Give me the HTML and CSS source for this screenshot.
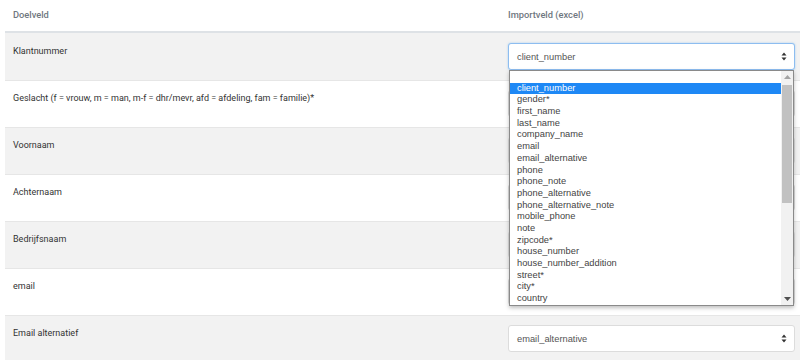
FILE: index.html
```html
<!DOCTYPE html>
<html lang="nl">
<head>
    <meta charset="UTF-8">
    <meta name="viewport" content="width=device-width, initial-scale=1.0">
    <title>Import velden koppelen</title>
    <link rel="stylesheet" href="styles.css">
</head>
<body>
    <div class="container">
        <table class="mapping">
            <thead>
                <tr>
                    <th class="col-target">Doelveld</th>
                    <th class="col-source">Importveld (excel)</th>
                </tr>
            </thead>
            <tbody>
                <tr>
                    <td>Klantnummer</td>
                    <td class="cell-picker">
                        <div class="picker-wrap">
                            <div class="picker focused">
                                <span>client_number</span>
                                <svg class="caret" width="6" height="9" viewBox="0 0 6 9"><path d="M3 0.5 L5.5 3.5 H0.5 Z M3 8.5 L5.5 5.5 H0.5 Z" fill="#333"/></svg>
                            </div>
                            <!-- open dropdown list -->
                            <div class="dropdown">
                                <ul class="options">
                                    <li>&nbsp;</li>
                                    <li class="active">client_number</li>
                                    <li>gender*</li>
                                    <li>first_name</li>
                                    <li>last_name</li>
                                    <li>company_name</li>
                                    <li>email</li>
                                    <li>email_alternative</li>
                                    <li>phone</li>
                                    <li>phone_note</li>
                                    <li>phone_alternative</li>
                                    <li>phone_alternative_note</li>
                                    <li>mobile_phone</li>
                                    <li>note</li>
                                    <li>zipcode*</li>
                                    <li>house_number</li>
                                    <li>house_number_addition</li>
                                    <li>street*</li>
                                    <li>city*</li>
                                    <li>country</li>
                                </ul>
                                <div class="scrollbar">
                                    <div class="scroll-btn">
                                        <svg width="7" height="4" viewBox="0 0 7 4"><path d="M3.5 0 L7 4 H0 Z" fill="#a3a3a3"/></svg>
                                    </div>
                                    <div class="scroll-track"><div class="scroll-thumb"></div></div>
                                    <div class="scroll-btn">
                                        <svg width="7" height="4" viewBox="0 0 7 4"><path d="M0 0 H7 L3.5 4 Z" fill="#505050"/></svg>
                                    </div>
                                </div>
                            </div>
                        </div>
                    </td>
                </tr>
                <tr>
                    <td>Geslacht (f = vrouw, m = man, m-f = dhr/mevr, afd = afdeling, fam = familie)*</td>
                    <td class="cell-picker">
                        <div class="picker"><span>gender*</span><svg class="caret" width="6" height="9" viewBox="0 0 6 9"><path d="M3 0.5 L5.5 3.5 H0.5 Z M3 8.5 L5.5 5.5 H0.5 Z" fill="#333"/></svg></div>
                    </td>
                </tr>
                <tr>
                    <td>Voornaam</td>
                    <td class="cell-picker">
                        <div class="picker"><span>first_name</span><svg class="caret" width="6" height="9" viewBox="0 0 6 9"><path d="M3 0.5 L5.5 3.5 H0.5 Z M3 8.5 L5.5 5.5 H0.5 Z" fill="#333"/></svg></div>
                    </td>
                </tr>
                <tr>
                    <td>Achternaam</td>
                    <td class="cell-picker">
                        <div class="picker"><span>last_name</span><svg class="caret" width="6" height="9" viewBox="0 0 6 9"><path d="M3 0.5 L5.5 3.5 H0.5 Z M3 8.5 L5.5 5.5 H0.5 Z" fill="#333"/></svg></div>
                    </td>
                </tr>
                <tr>
                    <td>Bedrijfsnaam</td>
                    <td class="cell-picker">
                        <div class="picker"><span>company_name</span><svg class="caret" width="6" height="9" viewBox="0 0 6 9"><path d="M3 0.5 L5.5 3.5 H0.5 Z M3 8.5 L5.5 5.5 H0.5 Z" fill="#333"/></svg></div>
                    </td>
                </tr>
                <tr>
                    <td>email</td>
                    <td class="cell-picker">
                        <div class="picker"><span>email</span><svg class="caret" width="6" height="9" viewBox="0 0 6 9"><path d="M3 0.5 L5.5 3.5 H0.5 Z M3 8.5 L5.5 5.5 H0.5 Z" fill="#333"/></svg></div>
                    </td>
                </tr>
                <tr>
                    <td>Email alternatief</td>
                    <td class="cell-picker">
                        <div class="picker"><span>email_alternative</span><svg class="caret" width="6" height="9" viewBox="0 0 6 9"><path d="M3 0.5 L5.5 3.5 H0.5 Z M3 8.5 L5.5 5.5 H0.5 Z" fill="#333"/></svg></div>
                    </td>
                </tr>
            </tbody>
        </table>
    </div>
</body>
</html>
```

FILE: styles.css
```css
* {
    margin: 0;
    padding: 0;
    box-sizing: border-box;
}

body {
    font-family: Roboto, 'Noto Sans', sans-serif;
    font-size: 9px;
    color: #333;
    background: #fff;
    overflow: hidden;
}

.container {
    padding-left: 5px;
}

.mapping {
    width: 100%;
    border-collapse: separate;
    border-spacing: 0;
}

.mapping th {
    text-align: left;
    font-weight: 500;
    font-size: 9.3px;
    color: #6f7780;
    padding: 8px 8px 9px;
    line-height: 14px;
    border-bottom: 2px solid #dee2e6;
}

.col-target {
    width: 495px;
}

.mapping td {
    vertical-align: top;
    padding: 10px 8px 9px;
    line-height: 14px;
    border-top: 1px solid #e6e6e6;
}

.mapping tbody tr:first-child td {
    border-top-color: #f2f2f2;
}

.mapping tbody tr:nth-child(odd) td {
    background: #f2f2f2;
}

.mapping td.cell-picker {
    padding: 9px 5px 10px 8px;
}

.picker-wrap {
    position: relative;
}

.picker {
    height: 27px;
    display: flex;
    align-items: center;
    justify-content: space-between;
    padding: 0 7px 0 8px;
    background: #fff;
    border: 1px solid #dcdcdc;
    border-radius: 3px;
    font-family: 'Liberation Sans', Arial, sans-serif;
    font-size: 9.3px;
    color: #555;
}

.picker.focused {
    border-color: #8dbdf0;
    box-shadow: 0 0 2px rgba(102, 175, 233, 0.6);
}

.caret {
    display: block;
}

/* the open list of the first picker */
.dropdown {
    position: absolute;
    top: 27px;
    left: 1px;
    right: 1px;
    display: flex;
    background: #fff;
    border: 1px solid #8a8a8a;
    box-shadow: 0 2px 4px rgba(0, 0, 0, 0.25);
    z-index: 10;
}

.options {
    list-style: none;
    flex: 1;
    font-family: 'Liberation Sans', Arial, sans-serif;
    font-size: 9.3px;
    color: #444;
}

.options li {
    height: 11.7px;
    line-height: 11.7px;
    padding-left: 7px;
    white-space: nowrap;
}

.options li.active {
    background: #1e88f5;
    color: #fff;
}

.scrollbar {
    width: 12px;
    display: flex;
    flex-direction: column;
    background: #f1f1f1;
}

.scroll-btn {
    height: 12px;
    display: flex;
    align-items: center;
    justify-content: center;
}

.scroll-track {
    flex: 1;
    padding: 2px 1px 0 1px;
}

.scroll-thumb {
    height: 118px;
    background: #c1c1c1;
}
```
